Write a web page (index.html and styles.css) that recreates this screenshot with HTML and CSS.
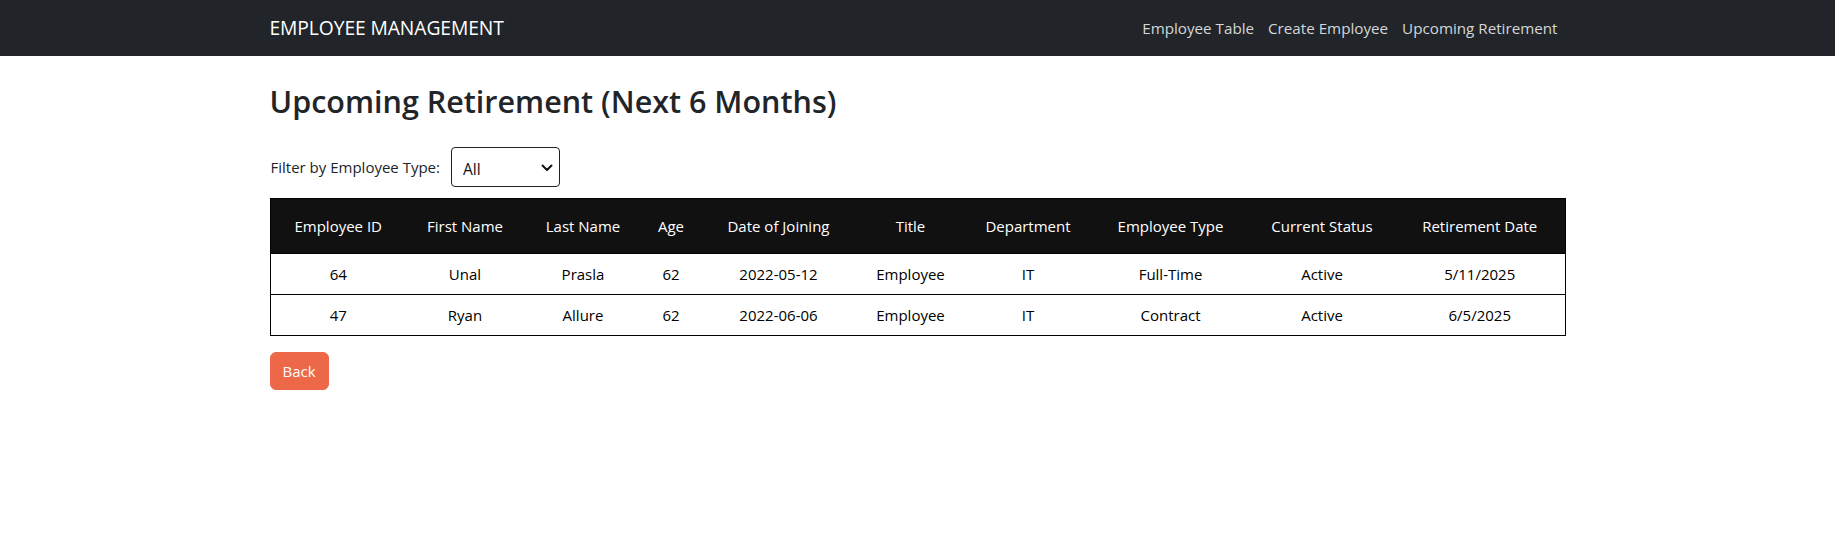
FILE: index.html
```html
<!DOCTYPE html>
<html lang="en">
<head>
<meta charset="utf-8">
<title>Employee Management</title>
<link rel="stylesheet" href="styles.css">
</head>
<body>
<nav class="navbar">
  <div class="container nav-inner">
    <a class="brand" href="#">EMPLOYEE MANAGEMENT</a>
    <ul class="nav-links">
      <li><a href="#">Employee Table</a></li>
      <li><a href="#">Create Employee</a></li>
      <li><a href="#">Upcoming Retirement</a></li>
    </ul>
  </div>
</nav>
<main class="container">
  <h2 class="page-title">Upcoming Retirement (Next 6 Months)</h2>
  <div class="filter-row">
    <label class="filter-label" for="type">Filter by Employee Type:</label>
    <div class="select-wrap">
      <select id="type" class="type-select">
        <option>All</option>
        <option>Full-Time</option>
        <option>Part-Time</option>
        <option>Contract</option>
        <option>Seasonal</option>
      </select>
      <svg class="chev" width="12" height="8" viewBox="0 0 12 8"><path d="M1.5 1.5 L6 6 L10.5 1.5" fill="none" stroke="#111" stroke-width="2" stroke-linecap="round" stroke-linejoin="round"/></svg>
    </div>
  </div>
  <table class="emp-table">
    <colgroup>
      <col class="c-id"><col class="c-first"><col class="c-last"><col class="c-age"><col class="c-doj">
      <col class="c-title"><col class="c-dept"><col class="c-type"><col class="c-status"><col class="c-ret">
    </colgroup>
    <thead>
      <tr>
        <th>Employee ID</th><th>First Name</th><th>Last Name</th><th>Age</th><th>Date of Joining</th>
        <th>Title</th><th>Department</th><th>Employee Type</th><th>Current Status</th><th>Retirement Date</th>
      </tr>
    </thead>
    <tbody>
      <tr>
        <td>64</td><td>Unal</td><td>Prasla</td><td>62</td><td>2022-05-12</td>
        <td>Employee</td><td>IT</td><td>Full-Time</td><td>Active</td><td>5/11/2025</td>
      </tr>
      <tr>
        <td>47</td><td>Ryan</td><td>Allure</td><td>62</td><td>2022-06-06</td>
        <td>Employee</td><td>IT</td><td>Contract</td><td>Active</td><td>6/5/2025</td>
      </tr>
    </tbody>
  </table>
  <button class="back-btn" type="button">Back</button>
</main>
</body>
</html>
```
FILE: styles.css
```css
* { box-sizing: border-box; }

body {
  margin: 0;
  font-family: "Open Sans", "Noto Sans", "Liberation Sans", sans-serif;
  font-size: 15px;
  line-height: 24px;
  color: #212529;
  background: #fff;
}

.container {
  max-width: 1320px;
  margin: 0 auto;
  padding: 0 12px;
}

.navbar {
  background: #212529;
  height: 56px;
}

.nav-inner {
  height: 56px;
  display: flex;
  align-items: center;
  justify-content: space-between;
}

.brand {
  color: #fff;
  text-decoration: none;
  font-size: 19.3px;
  line-height: 30px;
  letter-spacing: -0.1px;
}

.nav-links {
  list-style: none;
  margin: 0;
  padding: 0;
  display: flex;
}

.nav-links a {
  display: block;
  padding: 8px 7px;
  color: #d5d6d7;
  text-decoration: none;
  font-size: 15.2px;
}

.nav-links li:last-child a { padding-right: 8px; }

.page-title {
  margin: 25px 0 0;
  font-size: 30.5px;
  line-height: 40px;
  font-weight: 600;
  color: #212529;
  letter-spacing: 0;
}

.filter-row {
  display: flex;
  align-items: center;
  gap: 11px;
  margin-top: 26px;
}

.filter-label {
  font-size: 15px;
  color: #212529;
  padding-left: 1px;
}

.select-wrap {
  position: relative;
  width: 109px;
  height: 40px;
}

.type-select {
  appearance: none;
  -webkit-appearance: none;
  width: 100%;
  height: 100%;
  border: 1px solid #222;
  border-radius: 4px;
  background: #fff;
  padding: 4px 0 0 11px;
  font-family: inherit;
  font-size: 15.5px;
  color: #111;
}

.chev {
  position: absolute;
  right: 7px;
  top: 17px;
  pointer-events: none;
}

.emp-table {
  width: 100%;
  margin-top: 11px;
  border-collapse: collapse;
  table-layout: fixed;
  border: 1px solid #000;
  color: #000;
}

.c-id { width: 136px; }
.c-first { width: 118px; }
.c-last { width: 118px; }
.c-age { width: 58px; }
.c-doj { width: 157px; }
.c-title { width: 107px; }
.c-dept { width: 128px; }
.c-type { width: 157px; }
.c-status { width: 146px; }
.c-ret { width: 170px; }

.emp-table th {
  background: #111;
  color: #fff;
  font-weight: 400;
  padding: 15px 4px;
  text-align: center;
  white-space: nowrap;
}

.emp-table td {
  padding: 8px 4px;
  text-align: center;
  border-top: 1px solid #000;
}

.back-btn {
  margin-top: 16px;
  display: inline-block;
  background: #ed6848;
  color: #fff;
  border: 1px solid #ed6848;
  border-radius: 6px;
  padding: 6px 12px;
  font-family: inherit;
  font-size: 15px;
  line-height: 24px;
  cursor: pointer;
}
```
